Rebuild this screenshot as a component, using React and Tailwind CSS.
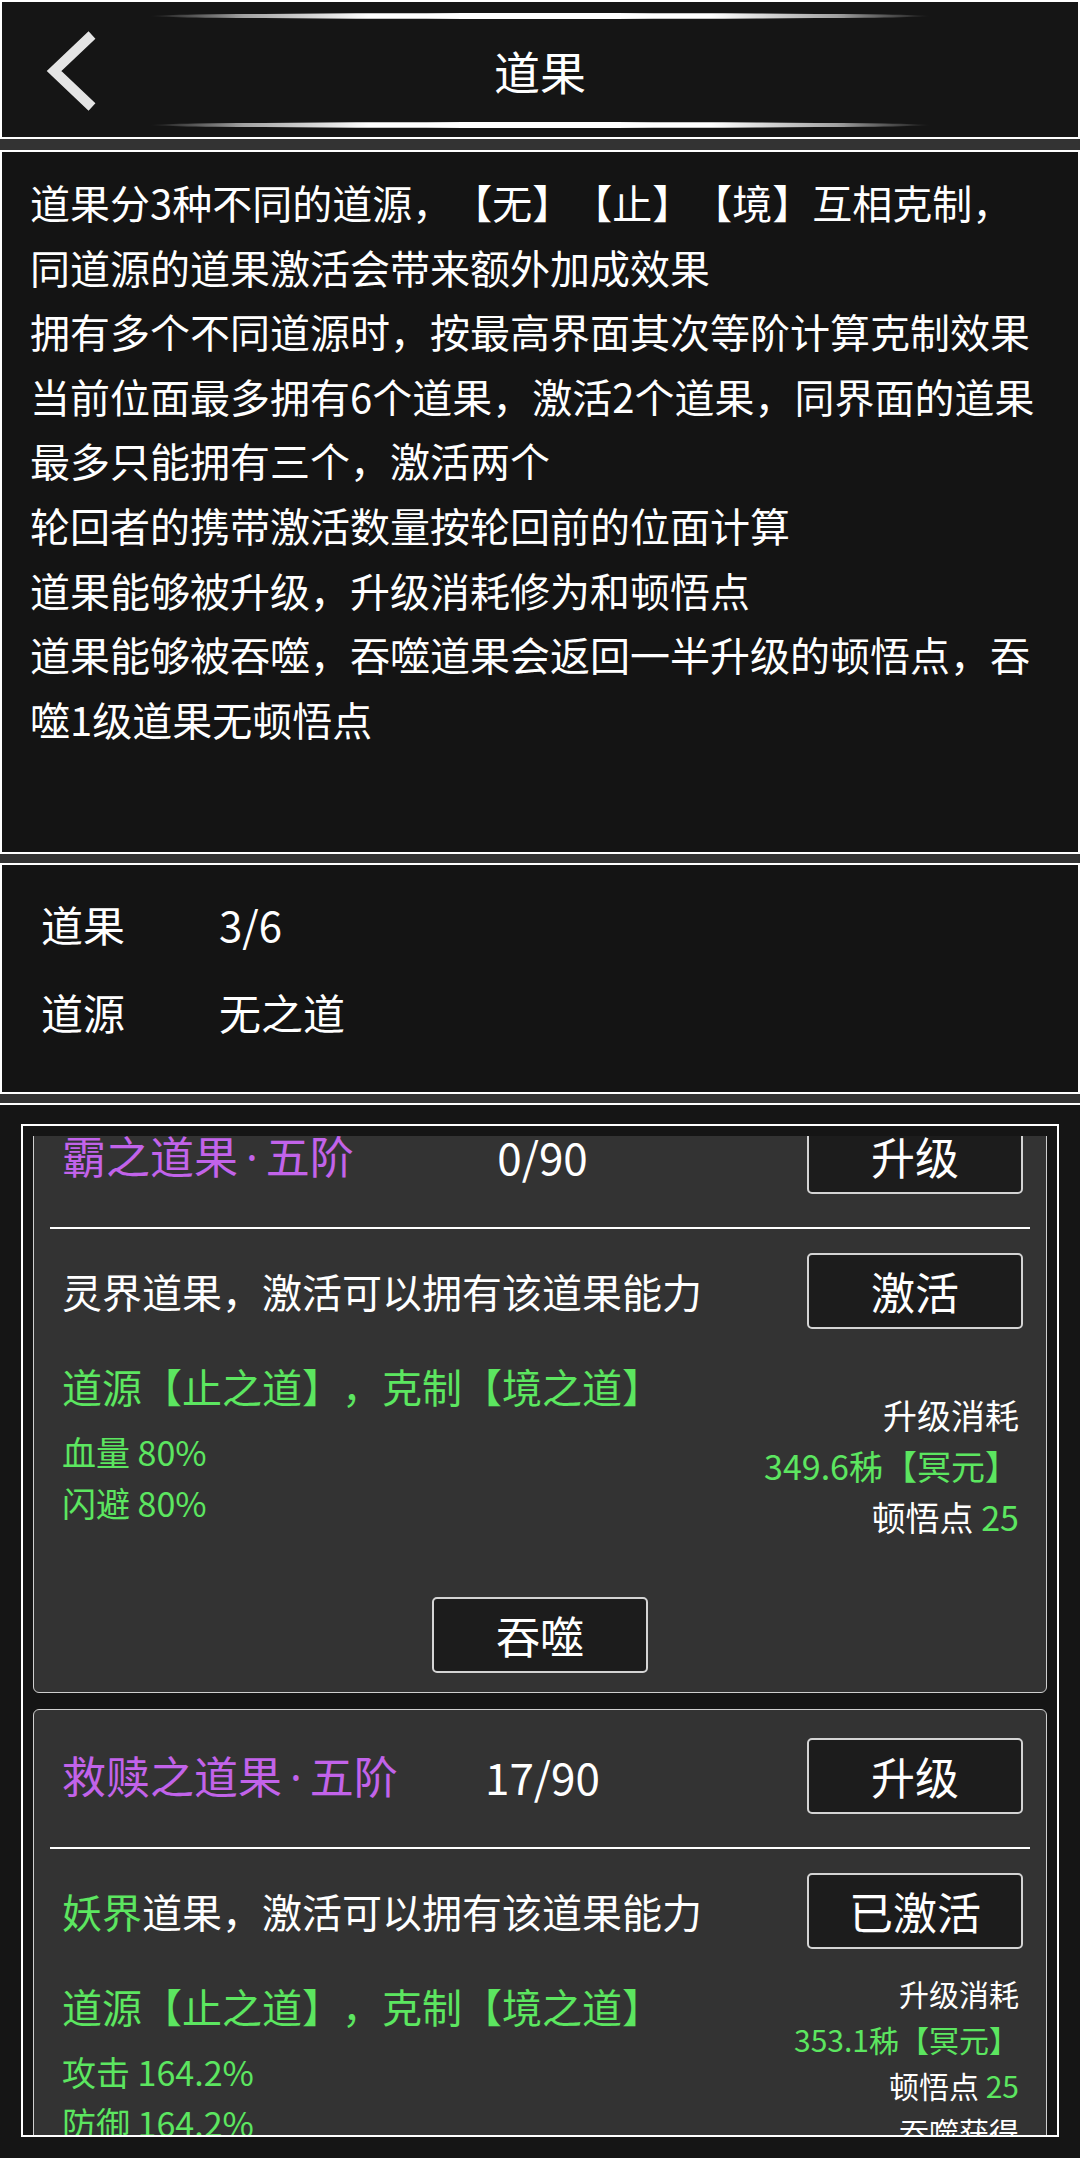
import React from "react";

const cards = [
  {
    name: "霸之道果",
    rank: "五阶",
    progress: "0/90",
    realm: null,
    action: "激活",
    stats: ["血量 80%", "闪避 80%"],
    cost: "349.6秭【冥元】",
    points: "25",
    small: false,
  },
  {
    name: "救赎之道果",
    rank: "五阶",
    progress: "17/90",
    realm: "妖界",
    action: "已激活",
    stats: ["攻击 164.2%", "防御 164.2%"],
    cost: "353.1秭【冥元】",
    points: "25",
    small: true,
  },
];

const intro = [
  "道果分3种不同的道源，【无】【止】【境】互相克制，",
  "同道源的道果激活会带来额外加成效果",
  "拥有多个不同道源时，按最高界面其次等阶计算克制效果",
  "当前位面最多拥有6个道果，激活2个道果，同界面的道果",
  "最多只能拥有三个，激活两个",
  "轮回者的携带激活数量按轮回前的位面计算",
  "道果能够被升级，升级消耗修为和顿悟点",
  "道果能够被吞噬，吞噬道果会返回一半升级的顿悟点，吞",
  "噬1级道果无顿悟点",
];

function Btn({ children }) {
  return (
    <button className="w-[216px] h-[76px] shrink-0 bg-[#1c1c1c] border-2 border-[#d4d4d4] rounded-[5px] text-[44px] leading-none text-white flex items-center justify-center">
      {children}
    </button>
  );
}

function Card({ card, first }) {
  return (
    <div
      className={
        "bg-[#333333] border border-[#cfcfcf] rounded-[6px] pt-[28px] pb-[19px] " +
        (first ? "-mt-[47px]" : "mt-[16px]")
      }
    >
      <div className="grid grid-cols-[1fr_auto_1fr] items-center h-[76px] pl-[28px] pr-[23px]">
        <div className="text-[44px] leading-none text-[#c263ea] whitespace-nowrap">
          {card.name}
          <span className="px-[8px] font-['Noto_Sans',sans-serif]">·</span>
          {card.rank}
        </div>
        <div className="text-[44px] leading-none">{card.progress}</div>
        <div className="justify-self-end">
          <Btn>升级</Btn>
        </div>
      </div>

      <div className="mx-[16px] mt-[33px] h-[2px] bg-white" />

      <div className="flex justify-between items-center h-[76px] mt-[24px] pl-[28px] pr-[23px]">
        <div className="text-[40px] leading-none whitespace-nowrap">
          {card.realm && <span className="text-[#5ce660]">{card.realm}</span>}
          {card.realm ? "道果，激活可以拥有该道果能力" : "灵界道果，激活可以拥有该道果能力"}
        </div>
        <Btn>{card.action}</Btn>
      </div>

      <div className="flex justify-between h-[268px] pl-[28px] pr-[27px]">
        <div className="pt-[32px] text-[#5ce660]">
          <div className="text-[40px] leading-[50px] whitespace-nowrap">道源【止之道】，克制【境之道】</div>
          <div className="mt-[15px] text-[34px] leading-[51px]">
            {card.stats.map((s) => (
              <div key={s}>{s}</div>
            ))}
          </div>
        </div>
        <div
          className={
            "text-right whitespace-nowrap " +
            (card.small ? "mt-[21px] text-[30px] leading-[46px]" : "mt-[60px] text-[34px] leading-[51px]")
          }
        >
          <div>升级消耗</div>
          <div className="text-[#5ce660]">{card.cost}</div>
          <div>
            顿悟点 <span className="text-[#5ce660]">{card.points}</span>
          </div>
          {card.small && (
            <>
              <div>吞噬获得</div>
              <div>
                顿悟点 <span className="text-[#5ce660]">8</span>
              </div>
            </>
          )}
        </div>
      </div>

      <div className="flex justify-center">
        <Btn>吞噬</Btn>
      </div>
    </div>
  );
}

export default function App() {
  return (
    <div className="w-[1080px] h-[2158px] flex flex-col bg-[#333333] overflow-hidden text-white [text-spacing-trim:space-all] font-['Noto_Sans_CJK_SC','Noto_Sans',sans-serif]">
      {/* title bar */}
      <header className="relative h-[139px] shrink-0 bg-[#151515] border-2 border-white flex items-center justify-center">
        <div className="absolute top-[11px] left-1/2 -translate-x-1/2 w-[780px] h-[6px] rounded-[50%] bg-[linear-gradient(to_right,rgba(255,255,255,0),rgba(255,255,255,0.6)_12%,#fff_28%,#fff_72%,rgba(255,255,255,0.6)_88%,rgba(255,255,255,0))]" />
        <div className="absolute bottom-[9px] left-1/2 -translate-x-1/2 w-[780px] h-[6px] rounded-[50%] bg-[linear-gradient(to_right,rgba(255,255,255,0),rgba(255,255,255,0.6)_12%,#fff_28%,#fff_72%,rgba(255,255,255,0.6)_88%,rgba(255,255,255,0))]" />
        <button className="absolute left-[40px] top-[29px]">
          <svg width="56" height="80" viewBox="0 0 56 80">
            <path d="M50 4 L12 40 L50 76" fill="none" stroke="#e4e4e4" strokeWidth="10" strokeLinejoin="miter" />
          </svg>
        </button>
        <h1 className="text-[46px] leading-none">道果</h1>
      </header>

      {/* rules */}
      <section className="mt-[11px] h-[704px] shrink-0 bg-[#141414] border-2 border-white pt-[18px] pl-[28px] text-[40px] leading-[64.6px]">
        {intro.map((line) => (
          <div key={line} className="whitespace-nowrap">
            {line}
          </div>
        ))}
      </section>

      {/* summary */}
      <section className="mt-[9px] h-[231px] shrink-0 bg-[#141414] border-2 border-white pt-[15px] pl-[39px] text-[42px] leading-[88px]">
        <div className="flex">
          <span className="w-[178px]">道果</span>
          <span>3/6</span>
        </div>
        <div className="flex">
          <span className="w-[178px]">道源</span>
          <span>无之道</span>
        </div>
      </section>

      {/* list */}
      <section className="mt-[9px] flex-1 bg-[#151515] border-t-2 border-white pt-[19px] px-[21px]">
        <div className="h-[1013px] border-2 border-white pt-[10px] px-[10px]">
          <div className="h-[999px] overflow-hidden">
            {cards.map((c, i) => (
              <Card key={c.name} card={c} first={i === 0} />
            ))}
          </div>
        </div>
      </section>
    </div>
  );
}
